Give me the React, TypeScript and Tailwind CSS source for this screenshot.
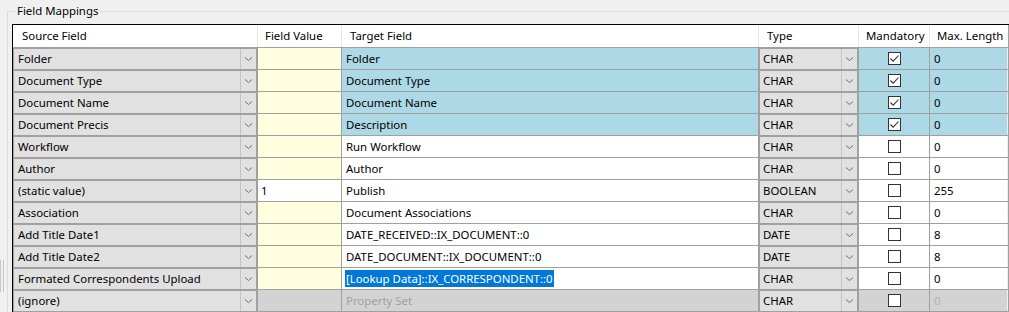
import React from 'react';

type Row = {
  source: string;
  value?: string;
  target: string;
  type: string;
  mandatory?: boolean;
  maxLength: string;
  tone: 'blue' | 'white' | 'ignored';
  selected?: boolean;
};

const rows: Row[] = [
  { source: 'Folder', target: 'Folder', type: 'CHAR', mandatory: true, maxLength: '0', tone: 'blue' },
  { source: 'Document Type', target: 'Document Type', type: 'CHAR', mandatory: true, maxLength: '0', tone: 'blue' },
  { source: 'Document Name', target: 'Document Name', type: 'CHAR', mandatory: true, maxLength: '0', tone: 'blue' },
  { source: 'Document Precis', target: 'Description', type: 'CHAR', mandatory: true, maxLength: '0', tone: 'blue' },
  { source: 'Workflow', target: 'Run Workflow', type: 'CHAR', maxLength: '0', tone: 'white' },
  { source: 'Author', target: 'Author', type: 'CHAR', maxLength: '0', tone: 'white' },
  { source: '(static value)', value: '1', target: 'Publish', type: 'BOOLEAN', maxLength: '255', tone: 'white' },
  { source: 'Association', target: 'Document Associations', type: 'CHAR', maxLength: '0', tone: 'white' },
  { source: 'Add Title Date1', target: 'DATE_RECEIVED::IX_DOCUMENT::0', type: 'DATE', maxLength: '8', tone: 'white' },
  { source: 'Add Title Date2', target: 'DATE_DOCUMENT::IX_DOCUMENT::0', type: 'DATE', maxLength: '8', tone: 'white' },
  { source: 'Formated Correspondents Upload', target: '[Lookup Data]::IX_CORRESPONDENT::0', type: 'CHAR', maxLength: '0', tone: 'white', selected: true },
  { source: '(ignore)', target: 'Property Set', type: 'CHAR', maxLength: '0', tone: 'ignored' },
];

const Chevron = () => (
  <svg width="9" height="6" viewBox="0 0 9 6" className="block">
    <path d="M1 1.5 L4.5 4.5 L8 1.5" fill="none" stroke="#6d6d6d" strokeWidth="1" />
  </svg>
);

const Combo = ({ text, width, textPad }: { text: string; width: string; textPad: string }) => (
  <div className={`${width} h-full shrink-0 border-r border-[#a0a0a0]`}>
    <div className="h-full flex border-t border-l border-r border-[#a0a0a0] bg-[#e1e1e1]">
      <div className={`flex-1 flex items-center ${textPad} whitespace-nowrap overflow-hidden`}>{text}</div>
      <div className="w-[16px] flex items-center justify-center border-l border-[#c4c4c4]">
        <Chevron />
      </div>
    </div>
  </div>
);

const CheckBox = ({ checked }: { checked?: boolean }) => (
  <div className="w-[13px] h-[13px] border border-[#333333] bg-white flex items-center justify-center">
    {checked && (
      <svg width="11" height="11" viewBox="0 0 11 11" className="block">
        <path d="M1.5 5.5 L4.2 8.2 L9.5 2.5" fill="none" stroke="#333333" strokeWidth="1.1" />
      </svg>
    )}
  </div>
);

export default function App() {
  const bgFor = (tone: Row['tone']) =>
    tone === 'blue' ? 'bg-[#add8e6]' : tone === 'ignored' ? 'bg-[#d3d3d3]' : 'bg-white';

  return (
    <div
      className="w-[1009px] h-[312px] bg-[#f0f0f0] overflow-hidden flex text-[11.4px] text-black"
      style={{ fontFamily: '"Noto Sans", "Open Sans", sans-serif' }}
    >
      {/* splitter grip */}
      <div className="w-[7px] shrink-0 flex flex-col">
        <div className="h-[260px]" />
        <div className="h-[32px] flex gap-[2px]">
          <div className="w-px bg-[#c8c8c8]" />
          <div className="w-px bg-[#c8c8c8]" />
        </div>
      </div>

      {/* group box */}
      <div className="flex-1 mt-[11px] border-t border-l border-[#dcdcdc] relative pl-[4px] pt-[12px]">
        <div className="absolute -top-[10px] left-[7px] px-[2px] bg-[#f0f0f0] leading-[18px] whitespace-nowrap">
          Field Mappings
        </div>

        <div className="border-t border-l border-black bg-[#f0f0f0]">
          {/* header */}
          <div className="h-[23px] flex bg-white border-b border-[#a0a0a0] border-r border-r-[#a0a0a0] whitespace-nowrap">
            <div className="w-[245px] shrink-0 pl-[9px] flex items-center border-r border-[#e5e5e5]">Source Field</div>
            <div className="w-[84px] shrink-0 pl-[7px] flex items-center border-r border-[#e5e5e5]">Field Value</div>
            <div className="w-[417px] shrink-0 pl-[8px] flex items-center border-r border-[#e5e5e5]">Target Field</div>
            <div className="w-[100px] shrink-0 pl-[8px] flex items-center border-r border-[#e5e5e5]">Type</div>
            <div className="w-[71px] shrink-0 pl-[7px] flex items-center border-r border-[#e5e5e5]">Mandatory</div>
            <div className="w-[77px] shrink-0 pl-[7px] flex items-center overflow-hidden">Max. Length</div>
          </div>

          {rows.map((r, i) => {
            const bg = bgFor(r.tone);
            const valueBg = r.tone === 'ignored' ? 'bg-[#d3d3d3]' : r.value ? 'bg-white' : 'bg-[#ffffe0]';
            const dim = r.tone === 'ignored' ? 'text-[#a0a0a0]' : '';
            return (
              <div key={i} className="h-[22px] flex border-b border-[#a0a0a0] border-r border-r-[#a0a0a0] whitespace-nowrap">
                <Combo text={r.source} width="w-[245px]" textPad="pl-[4px]" />
                <div className={`w-[84px] shrink-0 ${valueBg} border-r border-[#a0a0a0] flex items-center pl-[3px]`}>
                  {r.value}
                </div>
                <div className={`w-[417px] shrink-0 ${bg} ${dim} border-r border-[#a0a0a0] flex items-center pl-[3px]`}>
                  {r.selected ? (
                    <span className="bg-[#0078d7] text-white leading-[17px] px-px">{r.target}</span>
                  ) : (
                    <span className="px-px">{r.target}</span>
                  )}
                </div>
                <Combo text={r.type} width="w-[100px]" textPad="pl-[3px]" />
                <div className={`w-[71px] shrink-0 ${bg} border-r border-[#a0a0a0] flex items-center justify-center`}>
                  <CheckBox checked={r.mandatory} />
                </div>
                <div className={`w-[77px] shrink-0 ${bg} ${r.tone === 'ignored' ? 'text-[#b4b4b4]' : ''} flex items-center pl-[4px]`}>
                  {r.maxLength}
                </div>
              </div>
            );
          })}
        </div>
      </div>
    </div>
  );
}
